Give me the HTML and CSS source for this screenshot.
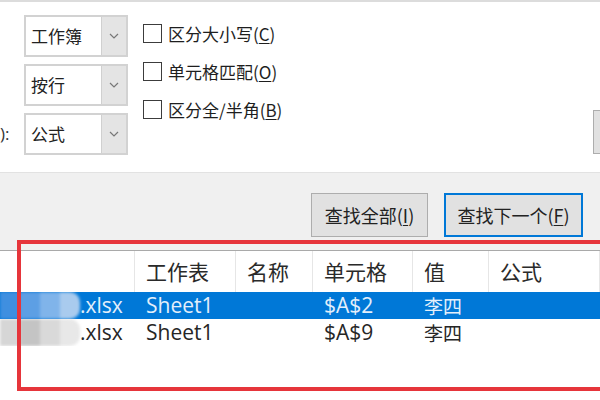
FILE: index.html
```html
<!DOCTYPE html>
<html>
	<head>
		<meta charset="utf-8">
		<title>查找和替换</title>
		<link rel="stylesheet" href="styles.css">
	</head>
	<body>
		<div class="dialog">
			<div class="options">
				<div class="fields">
					<span class="label"></span>
					<div class="select"><span class="value">工作簿</span><span class="arrow"><svg width="10" height="6" viewBox="0 0 10 6"><path d="M1 1 L5 5 L9 1" fill="none" stroke="#777" stroke-width="1.2"/></svg></span></div>
					<span class="label"></span>
					<div class="select"><span class="value">按行</span><span class="arrow"><svg width="10" height="6" viewBox="0 0 10 6"><path d="M1 1 L5 5 L9 1" fill="none" stroke="#777" stroke-width="1.2"/></svg></span></div>
					<span class="label">):</span>
					<div class="select"><span class="value">公式</span><span class="arrow"><svg width="10" height="6" viewBox="0 0 10 6"><path d="M1 1 L5 5 L9 1" fill="none" stroke="#777" stroke-width="1.2"/></svg></span></div>
				</div>
				<ul class="checks">
					<li><span class="box"></span>区分大小写(<u>C</u>)</li>
					<li><span class="box"></span>单元格匹配(<u>O</u>)</li>
					<li><span class="box"></span>区分全/半角(<u>B</u>)</li>
				</ul>
				<div class="side"><button type="button" class="btn more"></button></div>
			</div>

			<div class="actions">
				<button type="button" class="btn all">查找全部(<u>I</u>)</button>
				<button type="button" class="btn next">查找下一个(<u>F</u>)</button>
			</div>

			<div class="results">
				<div class="cols head">
					<span></span>
					<span>工作表</span>
					<span>名称</span>
					<span>单元格</span>
					<span>值</span>
					<span>公式</span>
				</div>
				<div class="cols row selected">
					<span class="file"><i class="mosaic blue"></i>.xlsx</span>
					<span>Sheet1</span>
					<span></span>
					<span>$A$2</span>
					<span class="cjk">李四</span>
					<span></span>
				</div>
				<div class="cols row">
					<span class="file"><i class="mosaic gray"></i>.xlsx</span>
					<span>Sheet1</span>
					<span></span>
					<span>$A$9</span>
					<span class="cjk">李四</span>
					<span></span>
				</div>
			</div>

			<!-- 标注框 -->
			<div class="mark"></div>
		</div>
	</body>
</html>
```

FILE: styles.css
```css
*{
	margin: 0;
	padding: 0;
	box-sizing: border-box;
}
html, body{
	width: 600px;
	height: 400px;
	overflow: hidden;
	background: #fff;
}
body{
	font-family: "Open Sans", "Noto Sans CJK SC", sans-serif;
	color: #262626;
}
u{
	text-decoration: underline;
	text-underline-offset: 2px;
}
.dialog{
	width: 600px;
	height: 400px;
	position: relative;
}

/* 选项区 */
.options{
	height: 172px;
	border-top: 2px solid #dcdcdc;
	display: flex;
}
.fields{
	display: grid;
	grid-template-columns: 24px 104px;
	grid-auto-rows: 42px;
	row-gap: 7px;
	padding-top: 13px;
}
.label{
	font-size: 17px;
	line-height: 42px;
	color: #333;
}
.select{
	display: flex;
	border: 2px solid #d2d2d2;
	background: #fff;
	font-family: "Noto Sans CJK SC", sans-serif;
}
.select .value{
	flex: 1;
	font-size: 17px;
	line-height: 38px;
	padding-left: 5px;
	color: #222;
}
.select .arrow{
	width: 25px;
	background: #e4e4e4;
	border-left: 1px solid #d0d0d0;
	display: flex;
	align-items: center;
	justify-content: center;
}
.checks{
	list-style: none;
	margin-left: 15px;
	padding-top: 12px;
	font-family: "Noto Sans CJK SC", sans-serif;
	font-size: 17px;
	color: #1e1e1e;
}
.checks li{
	height: 38px;
	display: flex;
	align-items: center;
}
.box{
	width: 19px;
	height: 19px;
	border: 1.5px solid #3c3c3c;
	background: #fff;
	margin-right: 6px;
}
.side{
	margin-left: auto;
	width: 7px;
	padding-top: 108px;
}

/* 按钮 */
.btn{
	height: 44px;
	background: #e1e1e1;
	border: 1px solid #adadad;
	font-family: "Noto Sans CJK SC", sans-serif;
	font-size: 18px;
	color: #222;
}
.more{
	width: 80px;
}
.actions{
	height: 78px;
	background: #f0f0f0;
	border-top: 1px solid #e2e2e2;
	display: flex;
	justify-content: flex-end;
	gap: 16px;
	padding: 20px 17px 0 0;
}
.all{
	width: 117px;
}
.next{
	width: 139px;
	border: 2px solid #0078d7;
}

/* 结果列表 */
.results{
	border-top: 1px solid #a9a9a9;
	font-size: 21px;
}
.cols{
	display: grid;
	grid-template-columns: 135px 101px 77px 100px 76px 1fr;
}
.cols span{
	padding-left: 11px;
	white-space: nowrap;
}
.head{
	height: 41px;
	line-height: 41px;
	font-family: "Noto Sans CJK SC", sans-serif;
	color: #2a2a2a;
}
.head span{
	border-right: 1px solid #e6e6e6;
}
.row{
	height: 27px;
	line-height: 27px;
}
.row .cjk{
	font-family: "Noto Sans CJK SC", sans-serif;
	font-size: 19px;
}
.selected{
	background: #0078d7;
	color: #e3effb;
}
.cols .file{
	padding-left: 0;
	display: flex;
	overflow: hidden;
}
.mosaic{
	width: 80px;
	height: 27px;
	flex: none;
	border-radius: 0 10px 10px 0;
	filter: blur(1.5px);
}
.mosaic.blue{
	background: linear-gradient(90deg, #3f8fe0 0 20px, #5d9fe4 20px 40px, #80b4ea 40px 60px, #a9cbee 60px);
}
.mosaic.gray{
	background: linear-gradient(90deg, #d6d6d6 0 20px, #c4c4c4 20px 40px, #d9d9d9 40px 60px, #e8e8e8 60px);
}

/* 红色标注框 */
.mark{
	position: absolute;
	left: 17px;
	top: 240px;
	right: -20px;
	height: 151px;
	border: 4px solid #e6353b;
	pointer-events: none;
}
```
